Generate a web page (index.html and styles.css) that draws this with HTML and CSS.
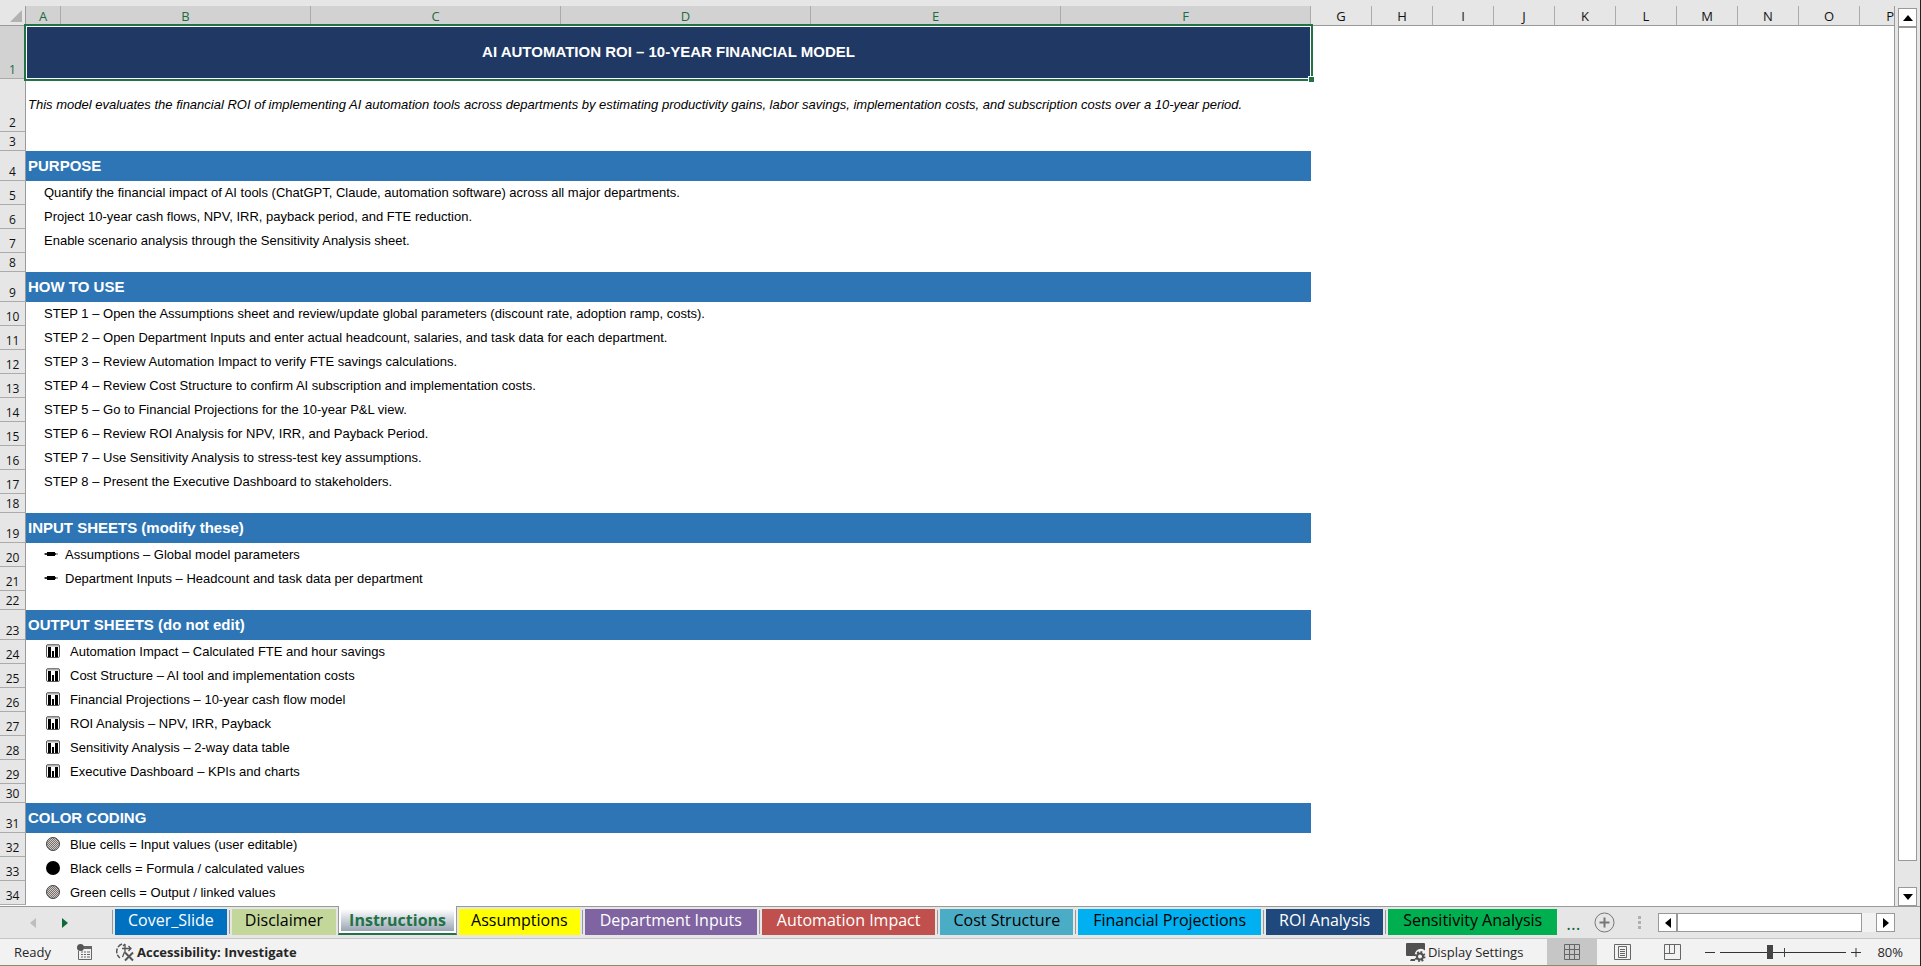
FILE: index.html
```html
<!DOCTYPE html>
<html lang="en">
<head>
    <meta charset="UTF-8">
    <meta name="viewport" content="width=device-width, initial-scale=1.0">
    <title>AI Automation ROI</title>
    <link rel="stylesheet" href="styles.css">
</head>
<body>

    <svg class="symbols" aria-hidden="true">
        <symbol id="icon-pen" viewBox="0 0 14 6">
            <path d="M0 3h3M11 3h3" stroke="#555" stroke-width="1"/>
            <path d="M1 2h2v2H1zM11 2h1v2h-1z" fill="#333"/>
            <rect x="3" y="1" width="8" height="4" fill="#000"/>
        </symbol>
        <symbol id="icon-chart" viewBox="0 0 14 14">
            <rect x="0.5" y="0.5" width="13" height="13" rx="1.5" fill="#fff" stroke="#555"/>
            <path d="M1 1.5h12" stroke="#aaa" stroke-width="2"/>
            <path d="M2 3h3v10h-3zM6 7h2v6h-2zM9 3h3v10h-3z" fill="#000"/>
        </symbol>
        <pattern id="hatch" width="2" height="2" patternUnits="userSpaceOnUse">
            <rect width="2" height="2" fill="#d2cdc8"/>
            <rect width="1" height="1" fill="#77706c"/>
            <rect x="1" y="1" width="1" height="1" fill="#77706c"/>
        </pattern>
        <symbol id="icon-hatched" viewBox="0 0 14 14">
            <circle cx="7" cy="7" r="6.5" fill="url(#hatch)" stroke="#444"/>
        </symbol>
        <symbol id="icon-black" viewBox="0 0 14 14">
            <circle cx="7" cy="7" r="7" fill="#000"/>
        </symbol>
    </svg>

    <main class="workspace">
        <div class="sheet">
            <table class="grid">
                <colgroup>
                    <col class="col-head">
                    <col class="col-a">
                    <col class="col-wide" span="5">
                    <col class="col-std" span="9">
                    <col>
                </colgroup>
                <thead>
                    <tr>
                        <th class="corner"><svg width="12" height="12" viewBox="0 0 12 12"><path d="M12 0v12H0z" fill="#b2b2b2"/></svg></th>
                        <th class="on">A</th><th class="on">B</th><th class="on">C</th><th class="on">D</th><th class="on">E</th><th class="on">F</th>
                        <th>G</th><th>H</th><th>I</th><th>J</th><th>K</th><th>L</th><th>M</th><th>N</th><th>O</th><th class="last">P</th>
                    </tr>
                </thead>
                <tbody>
                    <tr class="tall"><th class="on">1</th><td colspan="6" class="title">AI AUTOMATION ROI – 10-YEAR FINANCIAL MODEL<span class="handle"></span></td></tr>
                    <tr class="tall"><th>2</th><td colspan="6" class="intro">This model evaluates the financial ROI of implementing AI automation tools across departments by estimating productivity gains, labor savings, implementation costs, and subscription costs over a 10-year period.</td></tr>
                    <tr class="gap"><th>3</th></tr>
                    <tr class="section"><th>4</th><td colspan="6">PURPOSE</td></tr>
                    <tr><th>5</th><td colspan="6">Quantify the financial impact of AI tools (ChatGPT, Claude, automation software) across all major departments.</td></tr>
                    <tr><th>6</th><td colspan="6">Project 10-year cash flows, NPV, IRR, payback period, and FTE reduction.</td></tr>
                    <tr><th>7</th><td colspan="6">Enable scenario analysis through the Sensitivity Analysis sheet.</td></tr>
                    <tr class="gap"><th>8</th></tr>
                    <tr class="section"><th>9</th><td colspan="6">HOW TO USE</td></tr>
                    <tr><th>10</th><td colspan="6">STEP 1 – Open the Assumptions sheet and review/update global parameters (discount rate, adoption ramp, costs).</td></tr>
                    <tr><th>11</th><td colspan="6">STEP 2 – Open Department Inputs and enter actual headcount, salaries, and task data for each department.</td></tr>
                    <tr><th>12</th><td colspan="6">STEP 3 – Review Automation Impact to verify FTE savings calculations.</td></tr>
                    <tr><th>13</th><td colspan="6">STEP 4 – Review Cost Structure to confirm AI subscription and implementation costs.</td></tr>
                    <tr><th>14</th><td colspan="6">STEP 5 – Go to Financial Projections for the 10-year P&amp;L view.</td></tr>
                    <tr><th>15</th><td colspan="6">STEP 6 – Review ROI Analysis for NPV, IRR, and Payback Period.</td></tr>
                    <tr><th>16</th><td colspan="6">STEP 7 – Use Sensitivity Analysis to stress-test key assumptions.</td></tr>
                    <tr><th>17</th><td colspan="6">STEP 8 – Present the Executive Dashboard to stakeholders.</td></tr>
                    <tr class="gap"><th>18</th></tr>
                    <tr class="section"><th>19</th><td colspan="6">INPUT SHEETS (modify these)</td></tr>
                    <tr><th>20</th><td colspan="6"><svg class="pen"><use href="#icon-pen"/></svg>Assumptions – Global model parameters</td></tr>
                    <tr><th>21</th><td colspan="6"><svg class="pen"><use href="#icon-pen"/></svg>Department Inputs – Headcount and task data per department</td></tr>
                    <tr class="gap"><th>22</th></tr>
                    <tr class="section"><th>23</th><td colspan="6">OUTPUT SHEETS (do not edit)</td></tr>
                    <tr><th>24</th><td colspan="6"><svg class="mark"><use href="#icon-chart"/></svg>Automation Impact – Calculated FTE and hour savings</td></tr>
                    <tr><th>25</th><td colspan="6"><svg class="mark"><use href="#icon-chart"/></svg>Cost Structure – AI tool and implementation costs</td></tr>
                    <tr><th>26</th><td colspan="6"><svg class="mark"><use href="#icon-chart"/></svg>Financial Projections – 10-year cash flow model</td></tr>
                    <tr><th>27</th><td colspan="6"><svg class="mark"><use href="#icon-chart"/></svg>ROI Analysis – NPV, IRR, Payback</td></tr>
                    <tr><th>28</th><td colspan="6"><svg class="mark"><use href="#icon-chart"/></svg>Sensitivity Analysis – 2-way data table</td></tr>
                    <tr><th>29</th><td colspan="6"><svg class="mark"><use href="#icon-chart"/></svg>Executive Dashboard – KPIs and charts</td></tr>
                    <tr class="gap"><th>30</th></tr>
                    <tr class="section"><th>31</th><td colspan="6">COLOR CODING</td></tr>
                    <tr><th>32</th><td colspan="6"><svg class="mark"><use href="#icon-hatched"/></svg>Blue cells = Input values (user editable)</td></tr>
                    <tr><th>33</th><td colspan="6"><svg class="mark"><use href="#icon-black"/></svg>Black cells = Formula / calculated values</td></tr>
                    <tr><th>34</th><td colspan="6"><svg class="mark"><use href="#icon-hatched"/></svg>Green cells = Output / linked values</td></tr>
                </tbody>
            </table>
        </div>
        <div class="vscroll">
            <button type="button" aria-label="Scroll up"><svg width="10" height="6" viewBox="0 0 10 6"><path d="M5 0l5 6H0z"/></svg></button>
            <div class="vthumb"></div>
            <button type="button" aria-label="Scroll down"><svg width="10" height="6" viewBox="0 0 10 6"><path d="M0 0h10L5 6z"/></svg></button>
        </div>
    </main>

    <nav class="tabbar">
        <div class="tabnav">
            <button type="button" aria-label="Previous sheets"><svg width="6" height="10" viewBox="0 0 6 10"><path d="M6 0v10L0 5z" fill="#bdbdbd"/></svg></button>
            <button type="button" aria-label="Next sheets"><svg width="6" height="10" viewBox="0 0 6 10"><path d="M0 0v10l6-5z" fill="#0e6b37"/></svg></button>
        </div>
        <div class="tabs">
            <a href="#cover" class="tab cover">Cover_Slide</a>
            <a href="#disclaimer" class="tab disclaimer">Disclaimer</a>
            <a href="#instructions" class="tab active"><span>Instructions</span></a>
            <a href="#assumptions" class="tab assumptions">Assumptions</a>
            <a href="#departments" class="tab departments">Department Inputs</a>
            <a href="#impact" class="tab impact">Automation Impact</a>
            <a href="#cost" class="tab cost">Cost Structure</a>
            <a href="#projections" class="tab projections">Financial Projections</a>
            <a href="#roi" class="tab roi">ROI Analysis</a>
            <a href="#sensitivity" class="tab sensitivity">Sensitivity Analysis</a>
        </div>
        <button type="button" class="more">...</button>
        <button type="button" aria-label="New sheet"><svg width="21" height="21" viewBox="0 0 21 21"><circle cx="10.5" cy="10.5" r="9.5" fill="none" stroke="#777"/><path d="M5.500 10.500h10M10.500 5.500v10" stroke="#777" stroke-width="2"/></svg></button>
        <svg class="grip" width="3" height="14" viewBox="0 0 3 14"><path d="M0 0h3v3H0zM0 5h3v3H0zM0 10h3v3H0z" fill="#b0b0b0"/></svg>
        <div class="hscroll">
            <button type="button" aria-label="Scroll left"><svg width="6" height="10" viewBox="0 0 6 10"><path d="M6 0v10L0 5z"/></svg></button>
            <div class="hthumb"></div>
            <button type="button" aria-label="Scroll right"><svg width="6" height="10" viewBox="0 0 6 10"><path d="M0 0v10l6-5z"/></svg></button>
        </div>
    </nav>

    <footer class="status">
        <span>Ready</span>
        <button type="button" class="macro" aria-label="Record macro"><svg width="16" height="16" viewBox="0 0 16 16"><path d="M4 3h10.500v12.500H1.500V7" fill="none" stroke="#666"/><path d="M7 2h8v3H7z" fill="#666"/><circle cx="3.5" cy="3.5" r="3.5" fill="#555"/><path d="M4 8h2M7 8h2M10 8h3M4 10.500h2M7 10.500h2M10 10.500h3M4 13h2M7 13h2M10 13h3" stroke="#666"/></svg></button>
        <button type="button" class="access"><svg width="20" height="20" viewBox="0 0 20 20"><path d="M7 2A8 8 0 0 0 5 16" fill="none" stroke="#555" stroke-width="1.500" stroke-dasharray="5 1.500"/><path d="M7 6.500h9M13.500 4l2.500 2.500L13.500 9M10 2v8M8 4l2-2M9.500 10l-2 5" fill="none" stroke="#555" stroke-width="1.300"/><path d="M10 10.500l8 8M18 10.500l-8 8" stroke="#555" stroke-width="2"/></svg>Accessibility: Investigate</button>
        <div class="status-right">
            <button type="button" class="display"><svg width="20" height="19" viewBox="0 0 20 19"><path d="M1 0h17a1 1 0 0 1 1 1v6.500a6 6 0 0 0-10 5.500H1a1 1 0 0 1-1-1V1a1 1 0 0 1 1-1zM5 16h4v2H4z" fill="#505050"/><circle cx="14" cy="13.5" r="3" fill="none" stroke="#505050" stroke-width="2"/><circle cx="14" cy="13.5" r="4.5" fill="none" stroke="#505050" stroke-width="2" stroke-dasharray="1.800 1.730"/></svg>Display Settings</button>
            <button type="button" class="view on" aria-label="Normal"><svg width="17" height="16" viewBox="0 0 17 16"><path d="M0.500 0.500h15v15H0.500zM0.500 5.500h15M0.500 10.500h15M5.500 0v16M10.500 0v16" fill="none" stroke="#666"/></svg></button>
            <button type="button" class="view" aria-label="Page layout"><svg width="17" height="16" viewBox="0 0 17 16"><path d="M0.500 0.500h16v15H0.500zM4.500 2.500h8v11h-8zM6 5.500h5M6 7.500h5M6 9.500h5M6 11.500h5" fill="none" stroke="#666"/></svg></button>
            <button type="button" class="view" aria-label="Page break preview"><svg width="17" height="16" viewBox="0 0 17 16"><path d="M0.500 0.500h16v15H0.500zM0.500 9.500h10v-9M5.500 0v9" fill="none" stroke="#666"/></svg></button>
            <div class="zoom">
                <button type="button" aria-label="Zoom out"><svg width="10" height="11" viewBox="0 0 10 11"><path d="M0 5.500h10" stroke="#333"/></svg></button>
                <input type="range" min="10" max="190" value="80" aria-label="Zoom">
                <button type="button" aria-label="Zoom in"><svg width="10" height="11" viewBox="0 0 10 11"><path d="M0 5.500h10M5 1v9" stroke="#333"/></svg></button>
            </div>
            <span class="percent">80%</span>
        </div>
    </footer>

</body>
</html>
```
FILE: styles.css
```css
* {
    box-sizing: border-box;
}

body {
    margin: 0;
    height: 100vh;
    display: flex;
    flex-direction: column;
    overflow: hidden;
    background: #e6e6e6;
    border-right: 1px solid #222;
    font-family: "Open Sans", "Noto Sans", sans-serif;
    font-size: 13px;
    color: #262626;
}

button {
    display: flex;
    align-items: center;
    justify-content: center;
    margin: 0;
    padding: 0;
    border: 0;
    background: none;
    color: inherit;
    font: inherit;
}

.symbols {
    position: absolute;
    width: 0;
    height: 0;
}

/* Sheet */

.workspace {
    flex: 1;
    min-height: 0;
    display: flex;
    padding-top: 6px;
}

.sheet {
    flex: 1;
    min-width: 0;
    overflow: hidden;
    background: #fff;
    border-right: 1px solid #999;
}

.grid {
    width: 100%;
    table-layout: fixed;
    border-collapse: separate;
    border-spacing: 0;
}

.col-head {
    width: 26px;
}

.col-a {
    width: 35px;
}

.col-wide {
    width: 250px;
}

.col-std {
    width: 61px;
}

.grid tr {
    height: 24px;
}

.grid thead tr {
    height: 20px;
}

.grid .tall {
    height: 53px;
}

.grid .gap {
    height: 19px;
}

.grid .section {
    height: 30px;
}

.grid th {
    padding: 0;
    background: #e6e6e6;
    color: #111;
    font-weight: 400;
}

.grid thead th {
    padding-top: 2px;
    line-height: 17px;
    border-right: 1px solid #ababab;
    border-bottom: 1px solid #999;
}

.grid thead .last {
    border-right: 0;
    text-align: right;
}

.grid thead .corner {
    padding: 0 3px 0 0;
    border-right-color: #999;
}

.corner svg {
    display: block;
    margin-left: auto;
}

.grid th.on {
    background: #d2d2d2;
    color: #1e6b41;
}

.grid tbody th {
    vertical-align: bottom;
    font-size: 12px;
    line-height: 16px;
    border-right: 1px solid #999;
    border-bottom: 1px solid #ababab;
}

.grid td {
    padding: 0 0 1px 18px;
    color: #000;
    font-family: "Liberation Sans", Arial, sans-serif;
    font-size: 13px;
    line-height: 16px;
    white-space: nowrap;
}

.grid .section td {
    padding-left: 2px;
    background: #2e75b6;
    color: #fff;
    font-size: 15px;
    font-weight: 700;
}

.grid .title {
    position: relative;
    padding: 0 0 2px;
    background: #203864;
    border: 1px solid #fff;
    outline: 2px solid #217346;
    color: #fff;
    font-size: 15px;
    font-weight: 700;
    text-align: center;
}

.handle {
    position: absolute;
    right: -4px;
    bottom: -4px;
    width: 6px;
    height: 6px;
    background: #217346;
    border: 1px solid #fff;
    border-width: 1px 0 0 1px;
    z-index: 1;
}

.grid .intro {
    padding-left: 2px;
    font-style: italic;
}

.mark,
.pen {
    width: 14px;
    height: 14px;
    margin: 0 10px 0 2px;
    vertical-align: -2px;
}

.pen {
    height: 6px;
    margin: 0 7px 0 0;
    vertical-align: 2px;
}

.vscroll {
    display: flex;
    flex-direction: column;
    width: 25px;
    padding: 2px 3px 0;
}

.vscroll button {
    height: 19px;
    border: 1px solid #999;
    background: #fff;
}

.vthumb {
    flex: 1;
    margin-bottom: 26px;
    border: 1px solid #999;
    background: #fff;
}

/* Sheet tabs */

.tabbar {
    display: flex;
    align-items: center;
    height: 33px;
    border-top: 1px solid #999;
    border-bottom: 1px solid #c6c6c6;
}

.tabnav {
    display: flex;
    gap: 26px;
    width: 110px;
    padding-left: 30px;
}

.tabs {
    display: flex;
    align-self: flex-start;
}

.tab {
    position: relative;
    height: 26px;
    margin: 2px 0 0 5px;
    padding: 0 13px;
    font-size: 16px;
    line-height: 22px;
    text-decoration: none;
    color: #000;
}

/* divider in the gap before each tab */
.tab::before {
    content: "";
    position: absolute;
    top: 1px;
    left: -3px;
    width: 1px;
    height: 24px;
    background: #999;
}

.cover {
    background: #0070c0;
    color: #fff;
}

.disclaimer {
    background: #c4d79b;
}

.tab.active {
    height: 29px;
    margin: -1px 0 0 2px;
    padding: 3px 2px 0;
    background: #fff;
    border: 1px solid #999;
    border-width: 0 1px;
    border-bottom: 2px solid #217346;
    color: #217346;
    font-weight: 700;
}

.active span {
    display: block;
    height: 22px;
    padding: 0 8px;
    background: linear-gradient(#fff, #9aa5b3);
}

.active::before,
.assumptions::before {
    display: none;
}

.assumptions {
    margin-left: 2px;
    padding: 0 12px;
    background: #ffff00;
}

.departments,
.impact,
.projections,
.sensitivity {
    padding: 0 15px;
}

.departments {
    background: #8064a2;
    color: #fff;
}

.impact {
    background: #c0504d;
    color: #fff;
}

.cost {
    background: #4bacc6;
}

.projections {
    background: #00b0f0;
}

.roi {
    background: #1f497d;
    color: #fff;
}

.sensitivity {
    background: #00b050;
}

.more {
    margin: 0 14px 0 9px;
    color: #0e6b37;
    font-size: 18px;
}

.grip {
    margin-left: auto;
    margin-right: 17px;
}

.hscroll {
    display: flex;
    width: 237px;
    height: 19px;
    margin-right: 25px;
    background: #f2f2f2;
}

.hscroll button {
    width: 19px;
    border: 1px solid #999;
    background: #fff;
}

.hthumb {
    flex: 1;
    margin-right: 14px;
    border: 1px solid #999;
    background: #fff;
}

/* Status bar */

.status {
    display: flex;
    align-items: center;
    height: 27px;
    padding-left: 14px;
    background: #f2f2f2;
    border-bottom: 1px solid #8b8a6c;
}

.macro {
    margin: 0 22px 0 26px;
}

.access {
    gap: 2px;
    font-weight: 700;
}

.status-right {
    display: flex;
    align-items: center;
    align-self: stretch;
    margin-left: auto;
}

.display {
    gap: 2px;
    margin-right: 24px;
}

.view {
    align-self: stretch;
    width: 50px;
}

.view.on {
    background: #c6c6c6;
}

.zoom {
    display: flex;
    align-items: center;
    gap: 5px;
    margin-left: 8px;
}

.zoom input {
    appearance: none;
    width: 126px;
    height: 14px;
    margin: 0;
    background:
        linear-gradient(#444, #444) 64px center / 1px 9px no-repeat,
        linear-gradient(#333, #333) center / 100% 1px no-repeat;
}

.zoom input::-webkit-slider-thumb {
    appearance: none;
    width: 6px;
    height: 14px;
    background: #444;
}

.percent {
    margin: 0 17px 0 16px;
}
```
